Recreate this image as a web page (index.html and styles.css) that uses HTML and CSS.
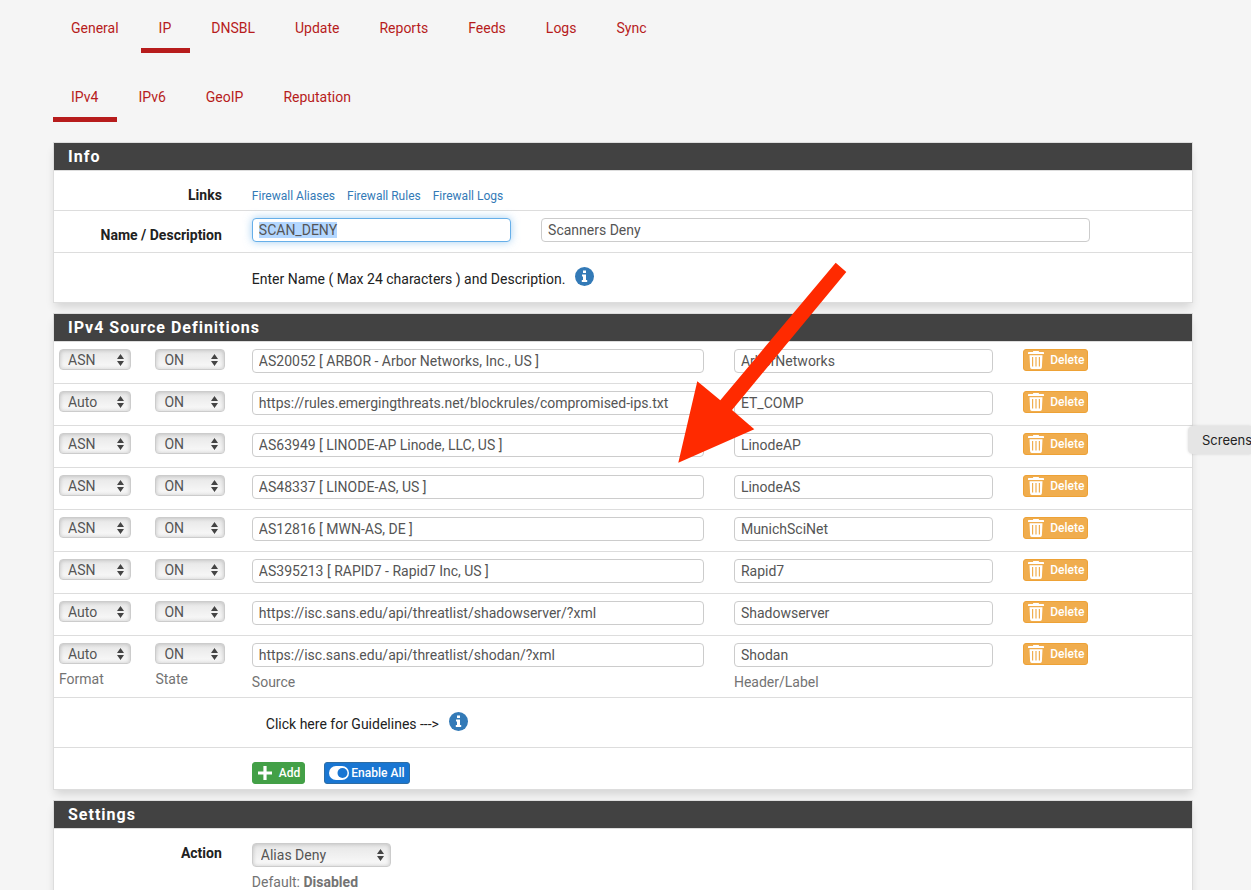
FILE: index.html
```html
<!DOCTYPE html>
<html lang="en">
<head>
<meta charset="utf-8">
<title>pfBlockerNG IPv4</title>
<link rel="stylesheet" href="styles.css">
</head>
<body>
<svg class="sprite" aria-hidden="true">
  <symbol id="trash" viewBox="0 0 16 18"><path fill="#fff" fill-rule="evenodd" d="M5 2V.6Q5 0 5.600 0h4.800Q11 0 11 .6V1h4.300q.7 0 .7.700V3H0V1.700Q0 1 .7 1H5zM1.500 4.200h13l-.6 12q-.1 1.800-1.700 1.800H3.800q-1.600 0-1.700-1.800zM4 6v9.500h1.200V6zM7.400 6v9.500h1.200V6zM10.800 6v9.500H12V6z"/></symbol>
  <symbol id="info" viewBox="0 0 19 19"><circle cx="9.500" cy="9.500" r="9.500" fill="#337ab7"/><path fill="#fff" d="M8 3.500h3v2.600H8zM7 7.600h4v5.400h1.200v2H6.800v-2H8V9.600H7z"/></symbol>
</svg>
<main class="page">
  <nav class="tabs" aria-label="Sections">
    <a href="#general">General</a><a href="#ip" class="active">IP</a><a href="#dnsbl">DNSBL</a><a href="#update">Update</a><a href="#reports">Reports</a><a href="#feeds">Feeds</a><a href="#logs">Logs</a><a href="#sync">Sync</a>
  </nav>
  <nav class="tabs subtabs" aria-label="IP sections">
    <a href="#ipv4" class="active">IPv4</a><a href="#ipv6">IPv6</a><a href="#geoip">GeoIP</a><a href="#reputation">Reputation</a>
  </nav>

  <section class="panel">
    <h2>Info</h2>
    <div class="row compact">
      <strong class="label">Links</strong>
      <div class="links"><a href="#aliases">Firewall Aliases</a><a href="#rules">Firewall Rules</a><a href="#fwlogs">Firewall Logs</a></div>
    </div>
    <div class="row naming">
      <label class="label" for="name">Name / Description</label>
      <input class="c3" id="name" type="text" value="SCAN_DENY" autofocus>
      <input class="c6" type="text" value="Scanners Deny" aria-label="Description">
    </div>
    <div class="row note">
      <div class="wide hint">Enter Name ( Max 24 characters ) and Description. <button type="button" class="info" aria-label="Help"><svg><use href="#info"/></svg></button></div>
    </div>
  </section>

  <section class="panel">
    <h2>IPv4 Source Definitions</h2>
    <div class="row">
      <select aria-label="Format"><option>ASN</option></select>
      <select class="state" aria-label="State"><option>ON</option></select>
      <input class="c5" type="text" aria-label="Source" value="AS20052 [ ARBOR - Arbor Networks, Inc., US ]">
      <input class="c3" type="text" aria-label="Header/Label" value="ArborNetworks">
      <button type="button" class="btn delete"><svg><use href="#trash"/></svg>Delete</button>
    </div>
    <div class="row">
      <select aria-label="Format"><option>Auto</option></select>
      <select class="state" aria-label="State"><option>ON</option></select>
      <input class="c5" type="text" aria-label="Source" value="https://rules.emergingthreats.net/blockrules/compromised-ips.txt">
      <input class="c3" type="text" aria-label="Header/Label" value="ET_COMP">
      <button type="button" class="btn delete"><svg><use href="#trash"/></svg>Delete</button>
    </div>
    <div class="row">
      <select aria-label="Format"><option>ASN</option></select>
      <select class="state" aria-label="State"><option>ON</option></select>
      <input class="c5" type="text" aria-label="Source" value="AS63949 [ LINODE-AP Linode, LLC, US ]">
      <input class="c3" type="text" aria-label="Header/Label" value="LinodeAP">
      <button type="button" class="btn delete"><svg><use href="#trash"/></svg>Delete</button>
    </div>
    <div class="row">
      <select aria-label="Format"><option>ASN</option></select>
      <select class="state" aria-label="State"><option>ON</option></select>
      <input class="c5" type="text" aria-label="Source" value="AS48337 [ LINODE-AS, US ]">
      <input class="c3" type="text" aria-label="Header/Label" value="LinodeAS">
      <button type="button" class="btn delete"><svg><use href="#trash"/></svg>Delete</button>
    </div>
    <div class="row">
      <select aria-label="Format"><option>ASN</option></select>
      <select class="state" aria-label="State"><option>ON</option></select>
      <input class="c5" type="text" aria-label="Source" value="AS12816 [ MWN-AS, DE ]">
      <input class="c3" type="text" aria-label="Header/Label" value="MunichSciNet">
      <button type="button" class="btn delete"><svg><use href="#trash"/></svg>Delete</button>
    </div>
    <div class="row">
      <select aria-label="Format"><option>ASN</option></select>
      <select class="state" aria-label="State"><option>ON</option></select>
      <input class="c5" type="text" aria-label="Source" value="AS395213 [ RAPID7 - Rapid7 Inc, US ]">
      <input class="c3" type="text" aria-label="Header/Label" value="Rapid7">
      <button type="button" class="btn delete"><svg><use href="#trash"/></svg>Delete</button>
    </div>
    <div class="row">
      <select aria-label="Format"><option>Auto</option></select>
      <select class="state" aria-label="State"><option>ON</option></select>
      <input class="c5" type="text" aria-label="Source" value="https://isc.sans.edu/api/threatlist/shadowserver/?xml">
      <input class="c3" type="text" aria-label="Header/Label" value="Shadowserver">
      <button type="button" class="btn delete"><svg><use href="#trash"/></svg>Delete</button>
    </div>
    <div class="row compact">
      <div class="field"><select id="format"><option>Auto</option></select><label for="format">Format</label></div>
      <div class="field"><select class="state" id="state"><option>ON</option></select><label for="state">State</label></div>
      <div class="field c5"><input id="source" type="text" value="https://isc.sans.edu/api/threatlist/shodan/?xml"><label for="source">Source</label></div>
      <div class="field c3"><input id="header" type="text" value="Shodan"><label for="header">Header/Label</label></div>
      <button type="button" class="btn delete"><svg><use href="#trash"/></svg>Delete</button>
    </div>
    <div class="row note">
      <div class="wide hint indent">Click here for Guidelines ---&gt; <button type="button" class="info" aria-label="Guidelines"><svg><use href="#info"/></svg></button></div>
    </div>
    <div class="row actions">
      <div class="wide buttons">
        <button type="button" class="btn add"><svg viewBox="0 0 16 16"><path d="M8 1v14M1 8h14" stroke="#fff" stroke-width="3.200"/></svg>Add</button>
        <button type="button" class="btn enable"><svg viewBox="0 0 20 14"><rect width="20" height="14" rx="7" fill="#fff"/><circle cx="13.500" cy="7" r="5" fill="#1976d2"/></svg>Enable All</button>
      </div>
    </div>
  </section>

  <section class="panel">
    <h2>Settings</h2>
    <div class="row settings">
      <label class="label" for="action">Action</label>
      <div class="field wide"><select class="large" id="action"><option>Alias Deny</option></select><span class="help">Default: <b>Disabled</b></span></div>
    </div>
  </section>
</main>
<svg class="arrow" viewBox="678 262 170 202" aria-hidden="true"><path fill="#ff2a00" d="M835.700 262.700 846.300 272 732 410l22.300 19.300-76 33.400 19-81.400 23 19z"/></svg>
<div class="tooltip">Screens</div>
<script src="main.js"></script>
</body>
</html>
```
FILE: styles.css
```css
* { box-sizing: border-box; }
html { overflow: hidden; }
body {
  position: relative;
  margin: 0;
  background: #f5f5f5;
  color: #212121;
  font: 14px/20px Roboto, sans-serif;
}
a { text-decoration: none; }
svg { display: block; }
.sprite { position: absolute; width: 0; height: 0; }
.page { padding: 3px 58px 0 53px; }

.tabs { display: flex; gap: 3px; margin-bottom: 19px; }
.subtabs { margin-bottom: 20px; }
.tabs a {
  padding: 15px 19px 10px 18px;
  border-bottom: 5px solid transparent;
  color: #b71c1c;
}
.tabs .active { border-bottom-color: #b71c1c; }

.panel {
  margin-bottom: 10px;
  border: 1px solid #ddd;
  background: #fff;
  box-shadow: 0 6px 9px -2px rgba(0, 0, 0, 0.14);
}
.panel h2 {
  margin: 0;
  padding: 0 14px;
  border-bottom: 1px solid #ddd;
  background: #424242;
  background-clip: padding-box;
  color: #fff;
  font-size: 16px;
  line-height: 27px;
  font-weight: 700;
  letter-spacing: 1px;
}
.row {
  display: grid;
  grid-template-columns: repeat(12, minmax(0, 1fr));
  column-gap: 30px;
  align-items: start;
  padding: 7px 6px 10px 5px;
  border-bottom: 1px solid #ddd;
}
.row:last-child { border-bottom: 0; }
.compact { padding-bottom: 5px; }
.naming { padding-bottom: 7px; }
.note { padding-top: 14px; padding-bottom: 11px; }
.actions, .settings { padding-top: 14px; padding-bottom: 5px; }
.label { grid-column: span 2; padding-top: 7px; text-align: right; font-weight: 700; }
.settings .label { padding-top: 0; }
.c3 { grid-column: span 3; }
.c5 { grid-column: span 5; }
.c6 { grid-column: span 6; }
.wide { grid-column: 3 / -1; }

.links {
  grid-column: 3 / -1;
  display: flex;
  gap: 12px;
  padding-top: 9px;
  font-size: 12px;
  line-height: 18px;
}
.links a { color: #337ab7; }

input, select {
  height: 24px;
  border: 1px solid #ccc;
  border-radius: 4px;
  color: #555;
  font: inherit;
}
input {
  width: 100%;
  padding: 0 6px;
  background: #fff;
}
input:focus {
  outline: 0;
  border-color: #66afe9;
  box-shadow: 0 0 8px rgba(102, 175, 233, 0.6);
}
input::selection { background: #b3d7ff; color: #555; }
select {
  appearance: none;
  width: 72px;
  height: 21px;
  padding: 0 8px;
  line-height: 18px;
  background: url("data:image/svg+xml,%3Csvg xmlns='http://www.w3.org/2000/svg' width='7' height='12'%3E%3Cpath fill='%23444' d='M3.500 0 7 5H0zM0 7h7l-3.500 5z'/%3E%3C/svg%3E") no-repeat right 6px center, linear-gradient(#e6e6e6, #fafafa);
  box-shadow: inset 0 0 4px rgba(0, 0, 0, 0.2);
}
.state { width: 70px; }
.large { width: 139px; height: 24px; }
.field { display: flex; flex-direction: column; align-items: flex-start; gap: 5px; color: #737373; }

.hint { display: flex; align-items: flex-start; gap: 10px; }
.note .hint { line-height: 24px; }
.indent { padding-left: 14px; }
.info { padding: 0; border: 0; background: none; }
.info svg { width: 19px; height: 19px; }

.btn {
  display: flex;
  align-items: center;
  height: 22px;
  padding: 0 4px;
  border: 1px solid;
  border-radius: 3px;
  color: #fff;
  font: 500 12px/18px Roboto, sans-serif;
  white-space: nowrap;
}
.btn svg { flex: none; }
.delete { gap: 6px; width: 65px; background: #f0ad4e; border-color: #eea236; }
.delete svg { width: 16px; height: 18px; }
.buttons { display: flex; gap: 19px; }
.add { gap: 6px; background: #43a047; border-color: #43a047; }
.add svg { width: 16px; height: 16px; }
.enable { gap: 2px; background: #1976d2; border-color: #2e6da4; }
.enable svg { width: 20px; height: 14px; }

.arrow { position: absolute; left: 678px; top: 262px; width: 170px; height: 202px; pointer-events: none; }
.tooltip {
  position: absolute;
  top: 426px;
  right: 0;
  width: 63px;
  padding: 4px 0 4px 14px;
  overflow: hidden;
  border-radius: 5px 0 0 5px;
  background: #e5e5e5;
  box-shadow: 0 0 3px rgba(0, 0, 0, 0.15);
  color: #222;
  font: 13px/20px Inter, sans-serif;
}
```
FILE: main.js
```js
document.getElementById("name").select();
```
